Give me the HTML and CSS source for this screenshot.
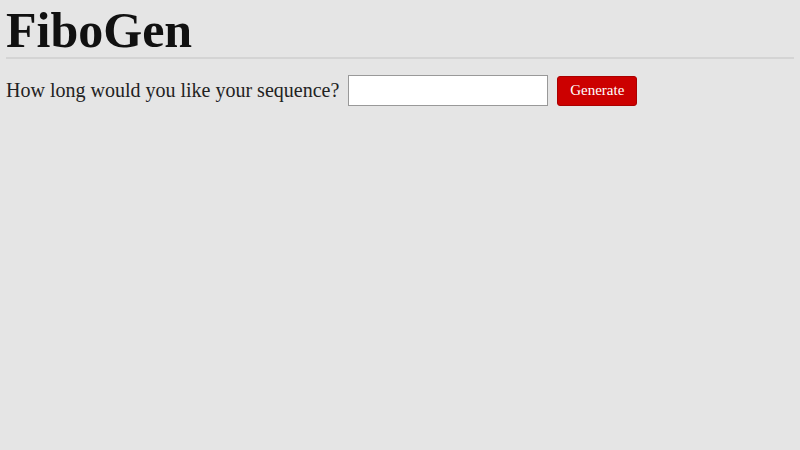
FILE: index.html
```html
<!DOCTYPE html>
<html lang="en">
    <head>
        <meta charset="UTF-8" />
        <title>FiboGen</title>
        <link rel="stylesheet" href="styles.css">
    </head>
    <body>
        <h1 class="title">FiboGen</h1>

        <!-- 수열 길이 입력 -->
        <form class="gen-form">
            <label for="len" class="gen-label">How long would you like your sequence?</label>
            <input type="text" id="len" class="gen-input" />
            <button type="button" class="gen-btn">Generate</button>
        </form>
    </body>
</html>
```

FILE: styles.css
```css
body {
    margin: 0;
    padding: 0 6px;
    background-color: #e5e5e5;
    font-family: "Liberation Serif", "Times New Roman", serif;
    color: #111;
}

.title {
    margin: 0;
    padding-top: 3px;
    font-size: 50px;
    line-height: 54px;
    font-weight: bold;
    border-bottom: 2px solid #d4d4d4;
}

.gen-form {
    display: flex;
    align-items: center;
    gap: 9px;
    margin-top: 16px;
}

.gen-label {
    font-size: 20px;
    color: #222;
}

.gen-input {
    width: 200px;
    height: 31px;
    box-sizing: border-box;
    border: 1px solid #999;
    background-color: #fff;
    margin: 0;
}

.gen-btn {
    width: 80px;
    height: 30px;
    padding: 0;
    border: 1px solid #a00;
    border-radius: 3px;
    background-color: #cc0000;
    color: #fff;
    font-family: "Liberation Serif", "Times New Roman", serif;
    font-size: 15px;
}
```
